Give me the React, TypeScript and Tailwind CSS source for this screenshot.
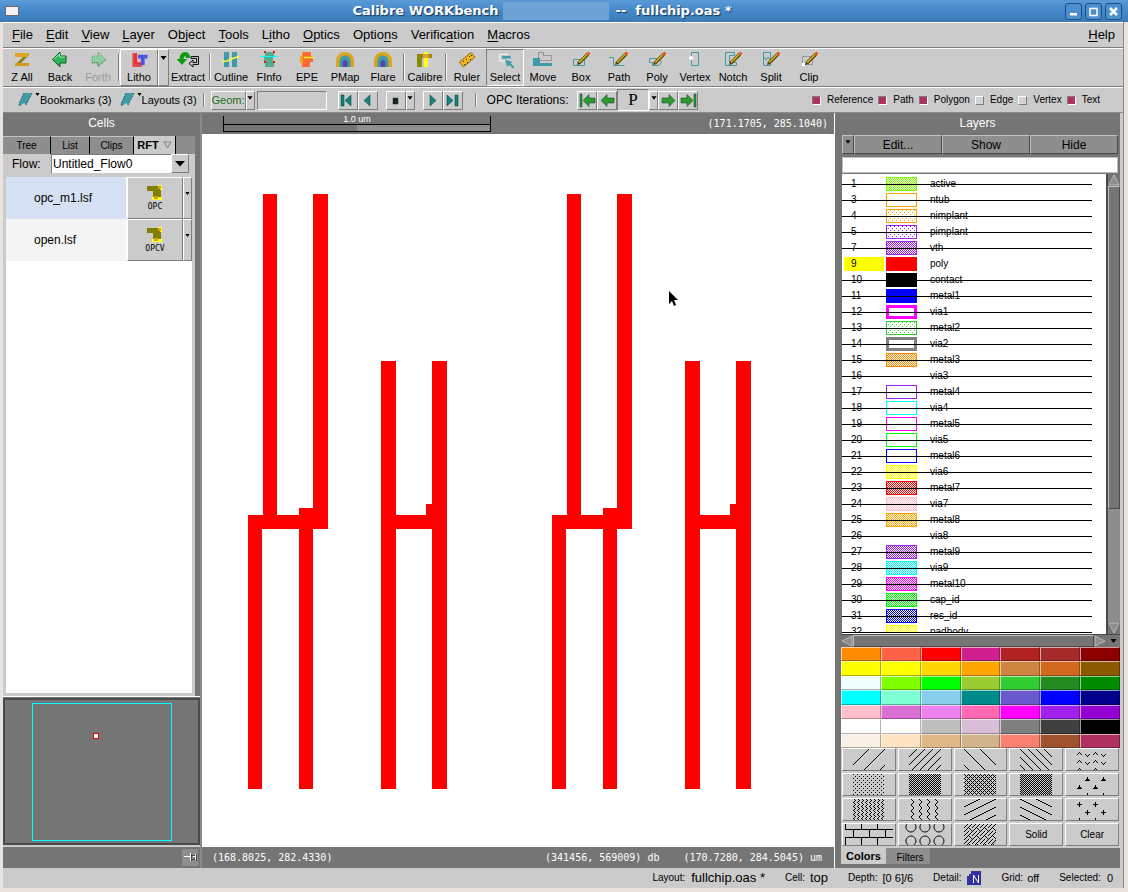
import React from "react";

const raised =
  "border border-t-white border-l-white border-b-[#7d7d7d] border-r-[#7d7d7d]";
const sunken =
  "border border-t-[#7d7d7d] border-l-[#7d7d7d] border-b-white border-r-white";

/* ---------- shared glyphs ---------- */

function Caret({ className = "" }: { className?: string }) {
  return (
    <svg className={className} width="7" height="4" viewBox="0 0 7 4" aria-hidden="true">
      <path d="M0.5 0H6.5L3.5 4Z" fill="#000" />
    </svg>
  );
}

function Pencil() {
  return (
    <g>
      <path d="M9.500 12.500L19 3" stroke="#5c5410" strokeWidth="3.600" />
      <path d="M10 11.500L18.500 3" stroke="#e0a81c" strokeWidth="1.600" />
      <path d="M18.500 3.500L20.500 1.500" stroke="#f0502a" strokeWidth="3" />
      <path d="M8 14L9 11.500L10.500 13Z" fill="#222" />
    </g>
  );
}

function Rainbow() {
  return (
    <g>
      <path d="M3 16V9.500A9 8.500 0 0 1 21 9.500V16Z" fill="#d9a520" />
      <path d="M6.500 16V10A5.500 5.500 0 0 1 17.500 10V16Z" fill="#409ba8" />
      <path d="M9.500 16V12A2.500 3 0 0 1 14.500 12V16Z" fill="#5a46a8" />
    </g>
  );
}

const icons: Record<string, React.ReactNode> = {
  zall: (
    <g>
      <path d="M15 4H19L9 14H5Z" fill="#8c7d10" />
      <path d="M5 2H19V4L17 6H5Z" fill="#e0a526" />
      <path d="M5 15V13L7 12H19V15Z" fill="#d29a1e" />
    </g>
  ),
  back: (
    <g>
      <path d="M4.500 8.500L12 1V5H18V12H12V16Z" fill="#2fb356" stroke="#0c5d20" />
      <path d="M6 8L11.500 3V6H17" fill="none" stroke="#8ff0a5" />
    </g>
  ),
  forth: (
    <g>
      <path d="M20 8.500L12 1V5H6V12H12V16Z" fill="#8fd0a0" stroke="#5fa070" strokeDasharray="1 1" />
      <path d="M19 9L12 15V11.500H6" fill="none" stroke="#666" strokeDasharray="1 1" />
    </g>
  ),
  litho: (
    <g>
      <path d="M5 1H10V11H15V16H5Z" fill="#e34a52" />
      <path d="M7 2H10V11H15V13H7Z" fill="#f02a35" />
      <path d="M11 3H21V7H18V14H14V7H11Z" fill="#4a55e6" />
      <path d="M14 7H15V11H14Z" fill="#8b3fb0" />
    </g>
  ),
  extract: (
    <g>
      <path d="M12 7C12 3 9 2.500 7.500 3.500C6 4.500 5.500 6.500 5.500 9" fill="none" stroke="#0d9a0d" strokeWidth="4" />
      <path d="M0.500 8H11L6 14Z" fill="#0d9a0d" />
      <path d="M15 5.500H22.500V13.500H17V16L13 12.500L17 9V11.500H20.500V7.500H15Z" fill="#bdbdbd" stroke="#111" />
    </g>
  ),
  cutline: (
    <g>
      <path d="M5 1H10V16H5ZM13 1H18V16H13Z" fill="#409ba8" />
      <path d="M3 10.500L8 10L15 7L20 5.500" fill="none" stroke="#ffff30" strokeWidth="1.500" />
    </g>
  ),
  finfo: (
    <g>
      <path d="M8 1H17V5H16V12H17V16H8V12H7V5H8Z" fill="#4fae8e" />
      <path d="M3 5.500H21" stroke="#00ffff" />
      <path d="M7 0H9V2H7ZM16 0H18V2H16ZM7 10H9V12H7ZM16 10H18V12H16Z" fill="#f01010" />
    </g>
  ),
  epe: (
    <g>
      <path d="M7 1H16V5H18V11H15V16H7V11H5V5H7Z" fill="#ff6a30" />
      <path d="M5 5H7V1H8V12H5Z" fill="#f0a020" />
      <path d="M9 6.500H19" stroke="#ffff30" strokeWidth="1.500" />
    </g>
  ),
  pmap: <Rainbow />,
  flare: <Rainbow />,
  calibre: (
    <g>
      <path d="M4 3H16V7H9V16H4Z" fill="#8a8a00" />
      <path d="M11 1H15V16H11Z" fill="#ffff20" />
      <path d="M10 3H19V7H10Z" fill="#e0a030" />
      <path d="M16 3H19V7H16Z" fill="#a08a00" />
    </g>
  ),
  ruler: (
    <g>
      <path d="M4.500 11L16 1.500L20 6L8.500 16Z" fill="#f2b720" stroke="#8a6a08" />
      <path
        d="M8 10H9V11H8ZM11 8H12V9H11ZM14 5H15V6H14ZM9 13H10V14H9ZM12 11H13V12H12ZM15 8H16V9H15ZM16 4H17V5H16Z"
        fill="#3a2c00"
      />
    </g>
  ),
  select: (
    <g>
      <path d="M6.500 2.500H14.500V9.500H6.500Z" fill="none" stroke="#fff" strokeWidth="1" />
      <path d="M9 4H18V7H9Z" fill="#409ba8" />
      <path d="M12 8L20 10.500L18 12L22 16L20.500 17.500L16.500 13.500L14.500 16Z" fill="#409ba8" />
    </g>
  ),
  move: (
    <g>
      <path d="M2 7H9V12H21V15H2Z" fill="#409ba8" />
      <path d="M7.500 1.500H12.500V4.500H20.500V9.500H7.500Z" fill="none" stroke="#7c7c7c" strokeDasharray="2 1" />
    </g>
  ),
  box: (
    <g>
      <path d="M4.500 8.500H15.500V14.500H4.500Z" fill="none" stroke="#409ba8" />
      <Pencil />
    </g>
  ),
  path: (
    <g>
      <path d="M2 6.500H6.500V14.500H17.500" fill="none" stroke="#409ba8" />
      <Pencil />
    </g>
  ),
  poly: (
    <g>
      <path d="M4.500 7.500H13.500L16.500 11.500L14 14.500H7.500L7.500 11.500H4.500Z" fill="none" stroke="#409ba8" />
      <Pencil />
    </g>
  ),
  vertex: (
    <g>
      <path d="M8.500 1.500H15.500V14.500H8.500Z" fill="none" stroke="#409ba8" />
      <path d="M5.500 7L8 4.500L10.500 7L8 9.500Z" fill="#fff" />
    </g>
  ),
  notch: (
    <g>
      <path d="M4.500 1.500H13.500V4.500H8.500V11.500H15.500V14.500H4.500Z" fill="none" stroke="#409ba8" />
      <Pencil />
    </g>
  ),
  split: (
    <g>
      <path d="M4.500 1.500H11.500V14.500H4.500Z" fill="none" stroke="#409ba8" />
      <path d="M5 6L7 9L9 6L11 9" fill="none" stroke="#409ba8" />
      <Pencil />
    </g>
  ),
  clip: (
    <g>
      <path d="M5.500 5.500H15.500V13.500H5.500Z" fill="none" stroke="#7c7c7c" strokeDasharray="2 1" />
      <path d="M5 12H8V15H5Z" fill="#fff" />
      <Pencil />
    </g>
  ),
};

function ToolButton({ icon, label, look = "" }: { icon: string; label: string; look?: string }) {
  return (
    <button
      type="button"
      className={`flex h-[37px] w-[38px] shrink-0 flex-col items-center pt-[2px] text-[11px] leading-[16px] ${look}`}
    >
      <svg width="24" height="18" viewBox="0 0 24 18" aria-hidden="true">
        {icons[icon]}
      </svg>
      <span>{label}</span>
    </button>
  );
}

function Sep({ className = "w-[3px]" }: { className?: string }) {
  return (
    <div className={`flex shrink-0 justify-center self-stretch py-[5px] ${className}`}>
      <div className="w-[2px] border-l border-[#7d7d7d] bg-[#f4f4f4]" />
    </div>
  );
}

/* ---------- top bars ---------- */

function TitleBar() {
  const box =
    "flex h-[17px] w-[17px] items-center justify-center rounded-[3px] border border-[#1d4f86] bg-[#4c8fcf]";
  return (
    <header className="flex h-[22px] items-center bg-gradient-to-b from-[#5b9ad6] via-[#4488ca] to-[#3c7ab5] pr-[6px] pl-[5px]">
      <div className="h-[10px] w-[14px] border border-[#6a6a6a] bg-[#f2f2f2]" />
      <h1
        className="flex flex-1 items-center justify-center font-['DejaVu_Sans'] text-[13px] leading-[20px] font-bold whitespace-pre text-white [text-shadow:1px_1px_1px_#14375f]"
      >
        <span>Calibre WORKbench</span>
        <span className="mr-[7px] ml-[4px] h-[18px] w-[106px] bg-[#6ea3d6]" />
        <span>--{"  "}fullchip.oas *</span>
      </h1>
      <div className="flex gap-[3px]">
        <button type="button" aria-label="Minimize" className={box}>
          <svg width="11" height="11" viewBox="0 0 11 11"><path d="M2 7H9V9.500H2Z" fill="#fff" /></svg>
        </button>
        <button type="button" aria-label="Maximize" className={box}>
          <svg width="11" height="11" viewBox="0 0 11 11"><path d="M2 2.500H9V9.500H2Z" fill="none" stroke="#fff" strokeWidth="1.500" /></svg>
        </button>
        <button type="button" aria-label="Close" className={box}>
          <svg width="11" height="11" viewBox="0 0 11 11"><path d="M2 2L9 9M9 2L2 9" stroke="#fff" strokeWidth="2.500" /></svg>
        </button>
      </div>
    </header>
  );
}

const menus: [string, string, string][] = [
  ["", "F", "ile"],
  ["", "E", "dit"],
  ["", "V", "iew"],
  ["", "L", "ayer"],
  ["O", "b", "ject"],
  ["", "T", "ools"],
  ["L", "i", "tho"],
  ["", "O", "ptics"],
  ["Optio", "n", "s"],
  ["Verific", "a", "tion"],
  ["", "M", "acros"],
];

function MenuBar() {
  return (
    <nav className="flex h-[26px] items-center gap-[13px] border-t border-b border-t-white border-b-[#7d7d7d] pr-[8px] pl-[9px] text-[13px] leading-[16px]">
      {menus.map(([a, u, b]) => (
        <button type="button" key={a + u + b}>
          {a}
          <span className="underline underline-offset-2">{u}</span>
          {b}
        </button>
      ))}
      <button type="button" className="ml-auto">
        <span className="underline underline-offset-2">H</span>elp
      </button>
    </nav>
  );
}

function ToolBar() {
  return (
    <div className="flex h-[39px] items-start border-t border-b border-t-white border-b-[#7d7d7d]">
      <ToolButton icon="zall" label="Z All" />
      <ToolButton icon="back" label="Back" />
      <ToolButton icon="forth" label="Forth" look="text-[#9a9a9a]" />
      <Sep />
      <ToolButton icon="litho" label="Litho" look={raised} />
      <button type="button" aria-label="Litho options" className={`flex h-[37px] w-[11px] shrink-0 justify-center pt-[6px] ${raised}`}>
        <Caret />
      </button>
      <ToolButton icon="extract" label="Extract" />
      <Sep className="w-[5px]" />
      <ToolButton icon="cutline" label="Cutline" />
      <ToolButton icon="finfo" label="FInfo" />
      <ToolButton icon="epe" label="EPE" />
      <ToolButton icon="pmap" label="PMap" />
      <ToolButton icon="flare" label="Flare" />
      <Sep className="w-[4px]" />
      <ToolButton icon="calibre" label="Calibre" />
      <Sep className="w-[4px]" />
      <ToolButton icon="ruler" label="Ruler" />
      <ToolButton icon="select" label="Select" look={sunken} />
      <ToolButton icon="move" label="Move" />
      <ToolButton icon="box" label="Box" />
      <ToolButton icon="path" label="Path" />
      <ToolButton icon="poly" label="Poly" />
      <ToolButton icon="vertex" label="Vertex" />
      <ToolButton icon="notch" label="Notch" />
      <ToolButton icon="split" label="Split" />
      <ToolButton icon="clip" label="Clip" />
    </div>
  );
}

function BookmarkButton({ label }: { label: string }) {
  return (
    <button type="button" className="flex h-[20px] items-start text-[11px] leading-[20px]">
      <svg className="mt-[2px]" width="17" height="15" viewBox="0 0 17 15" aria-hidden="true">
        <path d="M6 1H14L8 13L6 11L2 14L1 12Z" fill="#409ba8" />
        <path d="M6 1L1 12L2 14M14 1L8 13" fill="none" stroke="#1f5d68" strokeDasharray="2 1" />
      </svg>
      <Caret className="mt-[3px] h-[3px] w-[5px]" />
      <span>{label}</span>
    </button>
  );
}

function SmallButton({ label, d, fill = "#12837f", w = "w-[19px]" }: { label: string; d: string; fill?: string; w?: string }) {
  return (
    <button type="button" aria-label={label} className={`flex h-[19px] ${w} shrink-0 items-center justify-center ${raised}`}>
      <svg width="17" height="15" viewBox="0 0 17 15">
        <path d={d} fill={fill} stroke="#0a3b30" strokeWidth="0.500" />
      </svg>
    </button>
  );
}

function CaretButton({ label, w = "w-[9px]" }: { label: string; w?: string }) {
  return (
    <button type="button" aria-label={label} className={`flex h-[19px] ${w} shrink-0 justify-center pt-[4px] ${raised}`}>
      <Caret className="h-[4px] w-[6px]" />
    </button>
  );
}

const filters: [string, boolean][] = [
  ["Reference", true],
  ["Path", true],
  ["Polygon", true],
  ["Edge", false],
  ["Vertex", false],
  ["Text", true],
];

function OptionBar() {
  return (
    <div className="flex h-[26px] items-center border-t border-b border-t-white border-b-[#8a8a8a] pr-[23px] pl-[15px]">
      <BookmarkButton label="Bookmarks (3)" />
      <div className="w-[8px]" />
      <BookmarkButton label="Layouts (3)" />
      <Sep className="w-[14px]" />
      <button type="button" className={`h-[19px] w-[35px] shrink-0 text-[11px] leading-[16px] text-[#1a6e1a] ${raised}`}>
        Geom:
      </button>
      <CaretButton label="Geometry type" />
      <input aria-label="Geometry" className={`ml-[2px] h-[19px] w-[70px] shrink-0 bg-transparent text-[11px] ${sunken}`} />
      <div className="ml-[11px] flex">
        <SmallButton label="First" w="w-[20px]" d="M2 2H5V13H2ZM12 2V13L6 7.500Z" />
        <SmallButton label="Previous" w="w-[20px]" d="M11 2V13L5 7.500Z" />
      </div>
      <div className="ml-[8px] flex">
        <SmallButton label="Stop" fill="#222" w="w-[20px]" d="M6 5H11V11H6Z" />
        <CaretButton label="Stop options" />
      </div>
      <div className="ml-[8px] flex">
        <SmallButton label="Next" w="w-[20px]" d="M6 2V13L12 7.500Z" />
        <SmallButton label="Last" w="w-[20px]" d="M3 2V13L9 7.500ZM11 2H14V13H11Z" />
      </div>
      <Sep className="ml-[10px] w-[7px]" />
      <span className="ml-[7px] text-[12px] leading-[16px] whitespace-nowrap">OPC Iterations:</span>
      <div className="ml-auto flex items-center">
        <SmallButton label="First iteration" w="w-[20px]" fill="#2c9a2c" d="M1 1H3V14H1ZM4 7.500L10 1.500V5H16V10H10V13.500Z" />
        <SmallButton label="Previous iteration" w="w-[20px]" fill="#2c9a2c" d="M2 7.500L8 1.500V5H15V10H8V13.500Z" />
        <button type="button" className={`h-[22px] w-[32px] font-['Liberation_Serif'] text-[17px] leading-[20px] ${sunken}`}>P</button>
        <CaretButton label="Choose iteration" />
        <SmallButton label="Next iteration" w="w-[20px]" fill="#2c9a2c" d="M15 7.500L9 1.500V5H2V10H9V13.500Z" />
        <SmallButton label="Last iteration" w="w-[20px]" fill="#2c9a2c" d="M16 1H14V14H16ZM13 7.500L7 1.500V5H1V10H7V13.500Z" />
      </div>
      <fieldset className="ml-[114px] flex shrink-0 items-center gap-[5px]">
        {filters.map(([name, on]) => (
          <label key={name} className="flex items-center gap-[6px] text-[10px] leading-[16px]">
            <input
              type="checkbox"
              defaultChecked={on}
              className={`h-[9px] w-[9px] appearance-none bg-[#d4d4d4] checked:border-t-[#7d7d7d] checked:border-r-white checked:border-b-white checked:border-l-[#7d7d7d] checked:bg-[#b03060] ${raised}`}
            />
            {name}
          </label>
        ))}
      </fieldset>
    </div>
  );
}

/* ---------- left panel ---------- */

function RecipeRow({ name, op, bg }: { name: string; op: string; bg: string }) {
  return (
    <li className="flex h-[42px]">
      <button type="button" className={`mr-[1px] flex-1 pl-[28px] text-left text-[12px] ${bg}`}>
        {name}
      </button>
      <button
        type="button"
        className={`flex w-[56px] flex-col items-center bg-[#cbcbcb] pt-[6px] font-['DejaVu_Sans_Mono'] text-[8px] leading-[12px] ${raised}`}
      >
        <svg width="18" height="17" viewBox="0 0 18 17" aria-hidden="true">
          <path d="M1 2H15V13H7V7H1Z" fill="#808000" />
          <path d="M12 1H16V6H14V3H12ZM6 13H16V16H6Z" fill="#ffff20" />
          <path d="M12 2H15V5H12ZM8 12H12V15H8Z" fill="#e09a20" />
        </svg>
        {op}
      </button>
      <button type="button" aria-label={`${op} options`} className={`flex w-[9px] justify-center bg-[#cbcbcb] pt-[14px] ${raised}`}>
        <Caret className="h-[3px] w-[5px]" />
      </button>
    </li>
  );
}

function CellsPanel() {
  const tab = "h-[18px] border-t border-r border-t-[#c4c4c4] border-r-black bg-[#8e8e8e]";
  return (
    <aside className="flex w-[197px] shrink-0 flex-col bg-[#757575]">
      <h2 className="h-[23px] text-center text-[12px] leading-[20px] text-white">Cells</h2>
      <div className="mr-[5px] flex bg-[#8e8e8e] text-[10px] leading-[16px]">
        <button type="button" className={`w-[48px] ${tab}`}>Tree</button>
        <button type="button" className={`w-[39px] ${tab}`}>List</button>
        <button type="button" className={`w-[44px] ${tab}`}>Clips</button>
        <button type="button" className="flex h-[18px] w-[42px] items-center justify-center gap-[4px] border-r border-black bg-[#cbcbcb] text-[11px] font-bold">
          RFT
          <svg width="9" height="8" viewBox="0 0 9 8" aria-hidden="true">
            <path d="M1 1H8L4.500 7Z" fill="#cbcbcb" stroke="#808080" />
          </svg>
        </button>
      </div>
      <div className="mr-[5px] flex flex-1 flex-col bg-[#cbcbcb] px-[3px] pb-[3px]">
        <label className="flex h-[23px] items-start text-[12px] leading-[20px]">
          <span className="w-[45px] pl-[6px]">Flow:</span>
          <span className="relative flex w-[138px]">
            <select className="h-[19px] w-full appearance-none border-t border-l border-[#7d7d7d] bg-white pl-px text-[12px] leading-[16px]">
              <option>Untitled_Flow0</option>
            </select>
            <span className={`pointer-events-none absolute top-0 right-0 flex h-[19px] w-[18px] items-center justify-center bg-[#cbcbcb] ${raised}`}>
              <svg width="10" height="6" viewBox="0 0 10 6"><path d="M0 0H10L5 5.500Z" /></svg>
            </span>
          </span>
        </label>
        <ul className="flex-1 bg-white">
          <RecipeRow name="opc_m1.lsf" op="OPC" bg="bg-[#d6e0f3]" />
          <RecipeRow name="open.lsf" op="OPCV" bg="bg-[#f4f4f4]" />
        </ul>
      </div>
      <div className="border-t border-white pt-[1px]">
        <div className="flex h-[147px] justify-center border-2 border-[#4a4a4a] p-[3px]">
          <svg width="140" height="138" viewBox="0 0 140 138" shapeRendering="crispEdges" aria-label="Overview map">
            <path d="M0 0H140V138H0ZM1 1V137H139V1Z" fill="#00ffff" fillRule="evenodd" />
            <path d="M61 30H67V36H61Z" fill="#ff0000" />
            <path d="M62 31H66V35H62Z" fill="#fff" />
          </svg>
        </div>
      </div>
      <div className="flex h-[23px] items-center justify-end border-t-2 border-[#cbcbcb] pr-[2px]">
        <button type="button" aria-label="Pin panel" className="flex h-[17px] w-[16px] items-center justify-center bg-[#8e8e8e]">
          <svg width="15" height="11" viewBox="0 0 15 11">
            <path d="M8.500 2V9M9 3.500H12V7.500H9M13.500 2V9" fill="none" stroke="#3f3f3f" />
            <path d="M1 4.500H7M7.500 1V9M10 4.500H12M12.500 2V8" fill="none" stroke="#fff" />
          </svg>
        </button>
      </div>
    </aside>
  );
}

/* ---------- drawing area ---------- */

function Cluster({ x }: { x: number }) {
  return (
    <g transform={`translate(${x} 0)`} fill="#ff0000">
      <path d="M61 60H75V381H97V374H111V60H126V395H111V655H97V395H60V655H46V381H61Z" />
      <path d="M179 227H194V381H224V370H230V227H245V655H230V395H194V655H179Z" />
    </g>
  );
}

function Canvas() {
  const coord = "font-['DejaVu_Sans_Mono'] text-[10px] leading-[22px] whitespace-pre text-white";
  return (
    <main className="flex min-w-0 flex-1 flex-col border-l-2 border-l-[#8a8a8a] bg-white">
      <div className="flex h-[21px] items-start justify-between bg-[#757575] pr-[6px] pl-[21px]">
        <div className="mt-[3px] flex w-[268px] flex-col border-x border-black">
          <span className="h-[8px] text-center text-[9px] leading-[7px] text-white">1.0 um</span>
          <div className="flex h-[8px] border-y border-black">
            <div className="flex-1" />
            <div className="flex-1 bg-[#8e8e8e]" />
          </div>
        </div>
        <span className={coord}>(171.1705, 285.1040)</span>
      </div>
      <div className="flex min-h-0 flex-1">
        <svg
          className="h-full w-full"
          viewBox="0 0 632 713"
          preserveAspectRatio="xMinYMin meet"
          shapeRendering="crispEdges"
          role="img"
          aria-label="Layout view of fullchip.oas"
        >
          <Cluster x={0} />
          <Cluster x={304} />
          <path d="M467 157V170L470 167L472 172L474 171L472 166H476Z" fill="#000" shapeRendering="auto" />
        </svg>
      </div>
      <div className="flex h-[21px] justify-between bg-[#757575] pr-[12px] pl-[10px]">
        <span className={coord}>(168.8025, 282.4330)</span>
        <span className={coord}>
          (341456, 569009) db{"    "}(170.7280, 284.5045) um
        </span>
      </div>
    </main>
  );
}

/* ---------- right panel ---------- */

type Fill = "check" | "dots" | "solid" | "open" | "thick" | "none";

const layers: [number, string, string, Fill][] = [
  [1, "active", "#7cfc00", "check"],
  [3, "ntub", "#ffa500", "open"],
  [4, "nimplant", "#ffa500", "dots"],
  [5, "pimplant", "#a020f0", "dots"],
  [7, "vth", "#a020f0", "check"],
  [9, "poly", "#ff0000", "solid"],
  [10, "contact", "#000000", "solid"],
  [11, "metal1", "#0000ff", "solid"],
  [12, "via1", "#ff00ff", "thick"],
  [13, "metal2", "#32cd32", "dots"],
  [14, "via2", "#808080", "thick"],
  [15, "metal3", "#ff8c00", "check"],
  [16, "via3", "#ffffff", "none"],
  [17, "metal4", "#a020f0", "open"],
  [18, "via4", "#00ffff", "open"],
  [19, "metal5", "#ff00ff", "open"],
  [20, "via5", "#00ff00", "open"],
  [21, "metal6", "#0000ff", "open"],
  [22, "via6", "#ffff00", "check"],
  [23, "metal7", "#ff0000", "check"],
  [24, "via7", "#ffc0cb", "check"],
  [25, "metal8", "#ffa500", "check"],
  [26, "via8", "#ffffff", "none"],
  [27, "metal9", "#a020f0", "check"],
  [28, "via9", "#00ffff", "check"],
  [29, "metal10", "#ff00ff", "check"],
  [30, "cap_id", "#00ff00", "check"],
  [31, "res_id", "#0000ff", "check"],
  [32, "padbody", "#ffff00", "check"],
];

function Swatch({ id, color, fill }: { id: number; color: string; fill: Fill }) {
  if (fill === "none") return null;
  const pid = `layer-${id}`;
  const edge = fill === "thick" ? 3 : 1;
  return (
    <svg className="block" width="31" height="14" viewBox="0 0 31 14" shapeRendering="crispEdges" aria-hidden="true">
      <defs>
        {fill === "check" && (
          <pattern id={pid} width="2" height="2" patternUnits="userSpaceOnUse">
            <path d="M1 0H2V1H1ZM0 1H1V2H0Z" fill={color} />
          </pattern>
        )}
        {fill === "dots" && (
          <pattern id={pid} width="4" height="4" patternUnits="userSpaceOnUse">
            <path d="M0 1H1V2H0ZM2 3H3V4H2Z" fill={color} />
          </pattern>
        )}
      </defs>
      <rect width="31" height="14" fill={color} />
      {fill !== "solid" && (
        <rect x={edge} y={edge} width={31 - 2 * edge} height={14 - 2 * edge} fill="#fff" />
      )}
      {(fill === "check" || fill === "dots") && (
        <rect x="1" y="1" width="29" height="12" fill={`url(#${pid})`} />
      )}
    </svg>
  );
}

const palette = [
  "#ff8c00", "#ff6347", "#ff0000", "#d02090", "#b22222", "#a52a2a", "#8b0000",
  "#ffff00", "#ffff00", "#ffd700", "#ffa500", "#cd853f", "#d2691e", "#8b5a00",
  "#f0ffff", "#7fff00", "#00ff00", "#9acd32", "#32cd32", "#228b22", "#008b00",
  "#00ffff", "#7fffd4", "#87ceeb", "#008b8b", "#6a5acd", "#0000ff", "#00008b",
  "#ffc0cb", "#da70d6", "#ee82ee", "#ff69b4", "#ff00ff", "#a020f0", "#9400d3",
  "#ffffff", "#ffffff", "#bebebe", "#d8bfd8", "#7f7f7f", "#404040", "#000000",
  "#faf0e6", "#ffe4c4", "#deb887", "#d2b48c", "#fa8072", "#a0522d", "#b03060",
];

const tiles: { name: string; w: number; h: number; d: string; solid?: boolean; wide?: boolean }[] = [
  { name: "Wide slash", w: 16, h: 16, d: "M-1 17L17 -1" },
  { name: "Slash", w: 8, h: 8, d: "M-1 9L9 -1" },
  { name: "Wide backslash", w: 16, h: 16, d: "M-1 -1L17 17" },
  { name: "Backslash", w: 8, h: 8, d: "M-1 -1L9 9" },
  {
    name: "Chevrons",
    w: 16,
    h: 8,
    d: "M3 3H4V4H3ZM2 4H3V5H2ZM4 4H5V5H4ZM1 5H2V6H1ZM5 5H6V6H5ZM9 5H10V6H9ZM13 5H14V6H13ZM10 6H11V7H10ZM12 6H13V7H12ZM11 7H12V8H11Z",
    solid: true,
  },
  { name: "Dots", w: 4, h: 4, d: "M0 0H1V1H0ZM2 2H3V3H2Z", solid: true },
  { name: "Dense check", w: 2, h: 2, d: "M0 0H1V1H0ZM1 1H2V2H1Z", solid: true },
  { name: "Lattice", w: 4, h: 4, d: "M0 0H1V1H0ZM1 1H2V2H1ZM2 2H3V3H2ZM3 1H4V2H3ZM1 3H2V4H1ZM3 3H4V4H3Z", solid: true },
  { name: "Check", w: 2, h: 2, d: "M1 0H2V1H1ZM0 1H1V2H0Z", solid: true },
  { name: "Triangles", w: 16, h: 16, d: "M9 7L11.500 3L14 7ZM1 15L3.500 11L6 15Z", solid: true },
  { name: "Dense zigzag", w: 4, h: 4, d: "M1 0H2V1H1ZM2 1H3V2H2ZM1 2H2V3H1ZM0 3H1V4H0Z", solid: true },
  { name: "Zigzag", w: 8, h: 6, d: "M2 0L5 3L2 6" },
  { name: "Shallow slash", w: 16, h: 8, d: "M-2 9L18 -1" },
  { name: "Shallow backslash", w: 16, h: 8, d: "M-2 -1L18 9" },
  { name: "Plus", w: 16, h: 16, d: "M1 5.500H6M3.500 3V8M9 13.500H14M11.500 11V16" },
  { name: "Bricks", w: 16, h: 16, d: "M0 5.500H16M0 13.500H16M8.500 5V13M0.500 13V16M0.500 0V5", wide: true },
  { name: "Circles", w: 14, h: 28, d: "M7 -2A5 5 0 1 1 6.900 -2M7 12A5 5 0 1 1 6.900 12" },
  {
    name: "Weave",
    w: 8,
    h: 8,
    d: "M0 7H1V8H0ZM1 6H2V7H1ZM2 5H3V6H2ZM3 4H4V5H3ZM4 3H5V4H4ZM5 2H6V3H5ZM6 1H7V2H6ZM7 0H8V1H7ZM0 3H1V4H0ZM1 2H2V3H1ZM2 1H3V2H2ZM3 0H4V1H3ZM5 4H6V5H5ZM6 5H7V6H6ZM7 6H8V7H7ZM4 7H5V8H4Z",
    solid: true,
  },
];

function PatternButtons() {
  return (
    <div className="grid grid-cols-5 gap-[2px] bg-[#cbcbcb] px-[1px] pb-[2px]">
      {tiles.map((t, i) => (
        <button type="button" key={t.name} aria-label={t.name} className={`flex h-[23px] justify-center overflow-hidden bg-[#cbcbcb] ${raised}`}>
          <svg
            width={t.wide ? 48 : t.name === "Circles" ? 42 : 32}
            height="21"
            shapeRendering={t.name === "Circles" ? "auto" : "crispEdges"}
          >
            <defs>
              <pattern id={`tile-${i}`} width={t.w} height={t.h} patternUnits="userSpaceOnUse">
                <path d={t.d} fill={t.solid ? "#000" : "none"} stroke={t.solid ? "none" : "#000"} />
              </pattern>
            </defs>
            <rect width="100%" height="21" fill={`url(#tile-${i})`} />
          </svg>
        </button>
      ))}
      <button type="button" className={`h-[23px] bg-[#cbcbcb] text-[10px] leading-[20px] ${raised}`}>Solid</button>
      <button type="button" className={`h-[23px] bg-[#cbcbcb] text-[10px] leading-[20px] ${raised}`}>Clear</button>
    </div>
  );
}

function Arrow({ d, label }: { d: string; label: string }) {
  return (
    <button type="button" aria-label={label} className="flex h-[12px] w-[12px] shrink-0 items-center justify-center bg-[#757575]">
      <svg width="12" height="12" viewBox="0 0 12 12"><path d={d} fill="#8e8e8e" stroke="#b8b8b8" /></svg>
    </button>
  );
}

function LayersPanel() {
  const bev = "border border-t-[#c0c0c0] border-l-[#c0c0c0] border-b-[#4a4a4a] border-r-[#4a4a4a] bg-[#8e8e8e]";
  return (
    <aside className="flex w-[286px] shrink-0 flex-col border-l border-white bg-[#757575] pl-[6px]">
      <h2 className="h-[22px] pr-[6px] text-center text-[12px] leading-[20px] text-white">Layers</h2>
      <div className="mr-[2px] ml-px flex h-[19px] text-[12px] leading-[16px]">
        <button type="button" aria-label="Layer menu" className={`flex w-[12px] justify-center pt-[4px] ${bev}`}>
          <Caret className="h-[4px] w-[6px]" />
        </button>
        <button type="button" className={`flex-1 ${bev}`}>Edit...</button>
        <button type="button" className={`flex-1 ${bev}`}>Show</button>
        <button type="button" className={`flex-1 ${bev}`}>Hide</button>
      </div>
      <input aria-label="Find layer" className="mt-[3px] mr-[2px] ml-px h-[16px] border border-[#c0c0c0] bg-white px-[2px] text-[11px]" />
      <div className="mt-[1px] ml-px flex min-h-0 flex-1 basis-[460px]">
        <div className="h-full min-w-0 flex-1 basis-0 overflow-hidden bg-white pt-[2px]">
          <div className="h-[457px] overflow-hidden">
            <table className="w-full border-collapse text-[10px] leading-[16px]">
              <tbody>
                {layers.map(([id, name, color, fill]) => (
                  <tr key={id} className="relative h-[16px]">
                    <td className={`h-[16px] w-[44px] p-0 ${name === "poly" ? "bg-[#ffff00] bg-clip-content py-[1px] pr-[2px] pl-[2px] leading-[14px]" : ""}`}>
                      <span className={name === "poly" ? "pl-[7px]" : "pl-[9px]"}>{id}</span>
                    </td>
                    <td className="w-[44px] p-0">
                      <Swatch id={id} color={color} fill={fill} />
                    </td>
                    <td className="p-0">
                      {name}
                      {name !== "poly" && <span className="absolute top-[8px] left-0 h-px w-[250px] bg-black" />}
                    </td>
                  </tr>
                ))}
              </tbody>
            </table>
          </div>
        </div>
        <div className="flex w-[14px] shrink-0 flex-col border-l-2 border-[#4a4a4a] bg-[#8e8e8e]">
          <Arrow label="Scroll up" d="M6 1L11 11H1Z" />
          <div className="h-[323px] border border-t-[#c0c0c0] border-r-[#4a4a4a] border-b-[#4a4a4a] border-l-[#c0c0c0] bg-[#757575]" />
          <div className="flex-1" />
          <Arrow label="Scroll down" d="M1 1H11L6 11Z" />
        </div>
      </div>
      <div className="flex h-[13px] border-t border-[#4a4a4a]">
        <Arrow label="Scroll left" d="M1 6L11 1V11Z" />
        <div className="h-[12px] flex-1 border border-t-[#c0c0c0] border-r-[#4a4a4a] border-b-[#4a4a4a] border-l-[#c0c0c0] bg-[#757575]" />
        <Arrow label="Scroll right" d="M11 6L1 1V11Z" />
        <button type="button" aria-label="More layers" className="flex w-[14px] items-center justify-center">
          <Caret />
        </button>
      </div>
      <div className="grid h-[101px] grid-cols-7 grid-rows-7 bg-[#8e8e8e]">
        {palette.map((c, i) => (
          <button
            type="button"
            key={i}
            aria-label={`Color ${c}`}
            className="border border-t-white/60 border-r-black/30 border-b-black/30 border-l-white/60"
            style={{ backgroundColor: c }}
          />
        ))}
      </div>
      <PatternButtons />
      <div className="flex h-[20px] items-start text-[11px] leading-[16px]">
        <button type="button" className="h-[16px] w-[45px] bg-[#cbcbcb] font-bold">Colors</button>
        <button type="button" className="h-[16px] w-[44px] bg-[#8e8e8e] pl-[4px] text-[10px] leading-[20px]">Filters</button>
      </div>
    </aside>
  );
}

/* ---------- status bar ---------- */

function StatusBar() {
  return (
    <footer className="flex h-[20px] items-center justify-end gap-[20px] pr-[10px] text-[10px] leading-[20px] whitespace-pre">
      <span className="flex gap-[6px]">Layout:<b className="text-[13px] font-normal">fullchip.oas *</b></span>
      <span className="flex gap-[5px]">Cell:<b className="text-[13px] font-normal">top</b></span>
      <span className="flex gap-[5px]">Depth:<b className="text-[11px] font-normal">[0 6]/6</b></span>
      <span className="flex items-center gap-[6px]">
        Detail:
        <svg width="14" height="14" viewBox="0 0 14 14" aria-label="Normal detail">
          <path d="M0 5H2V3H4V0H14V14H0Z" fill="#3030a0" />
          <path d="M6.500 12V4L11.500 12V4" fill="none" stroke="#fff" />
        </svg>
      </span>
      <span className="flex gap-[4px]">Grid:<b className="text-[11px] font-normal">off</b></span>
      <span className="flex gap-[6px]">Selected:<b className="text-[11px] font-normal">0</b></span>
    </footer>
  );
}

export default function App() {
  return (
    <div className="flex min-h-screen flex-col bg-[#e9e4dd] font-['Liberation_Sans',Arial,sans-serif] text-black">
      <TitleBar />
      <div className="mr-[4px] mb-[4px] ml-[3px] flex flex-1 flex-col border-r border-[#8a8a8a] bg-[#cbcbcb]">
        <MenuBar />
        <ToolBar />
        <OptionBar />
        <div className="mr-[3px] flex flex-1">
          <CellsPanel />
          <Canvas />
          <LayersPanel />
        </div>
        <StatusBar />
      </div>
    </div>
  );
}
